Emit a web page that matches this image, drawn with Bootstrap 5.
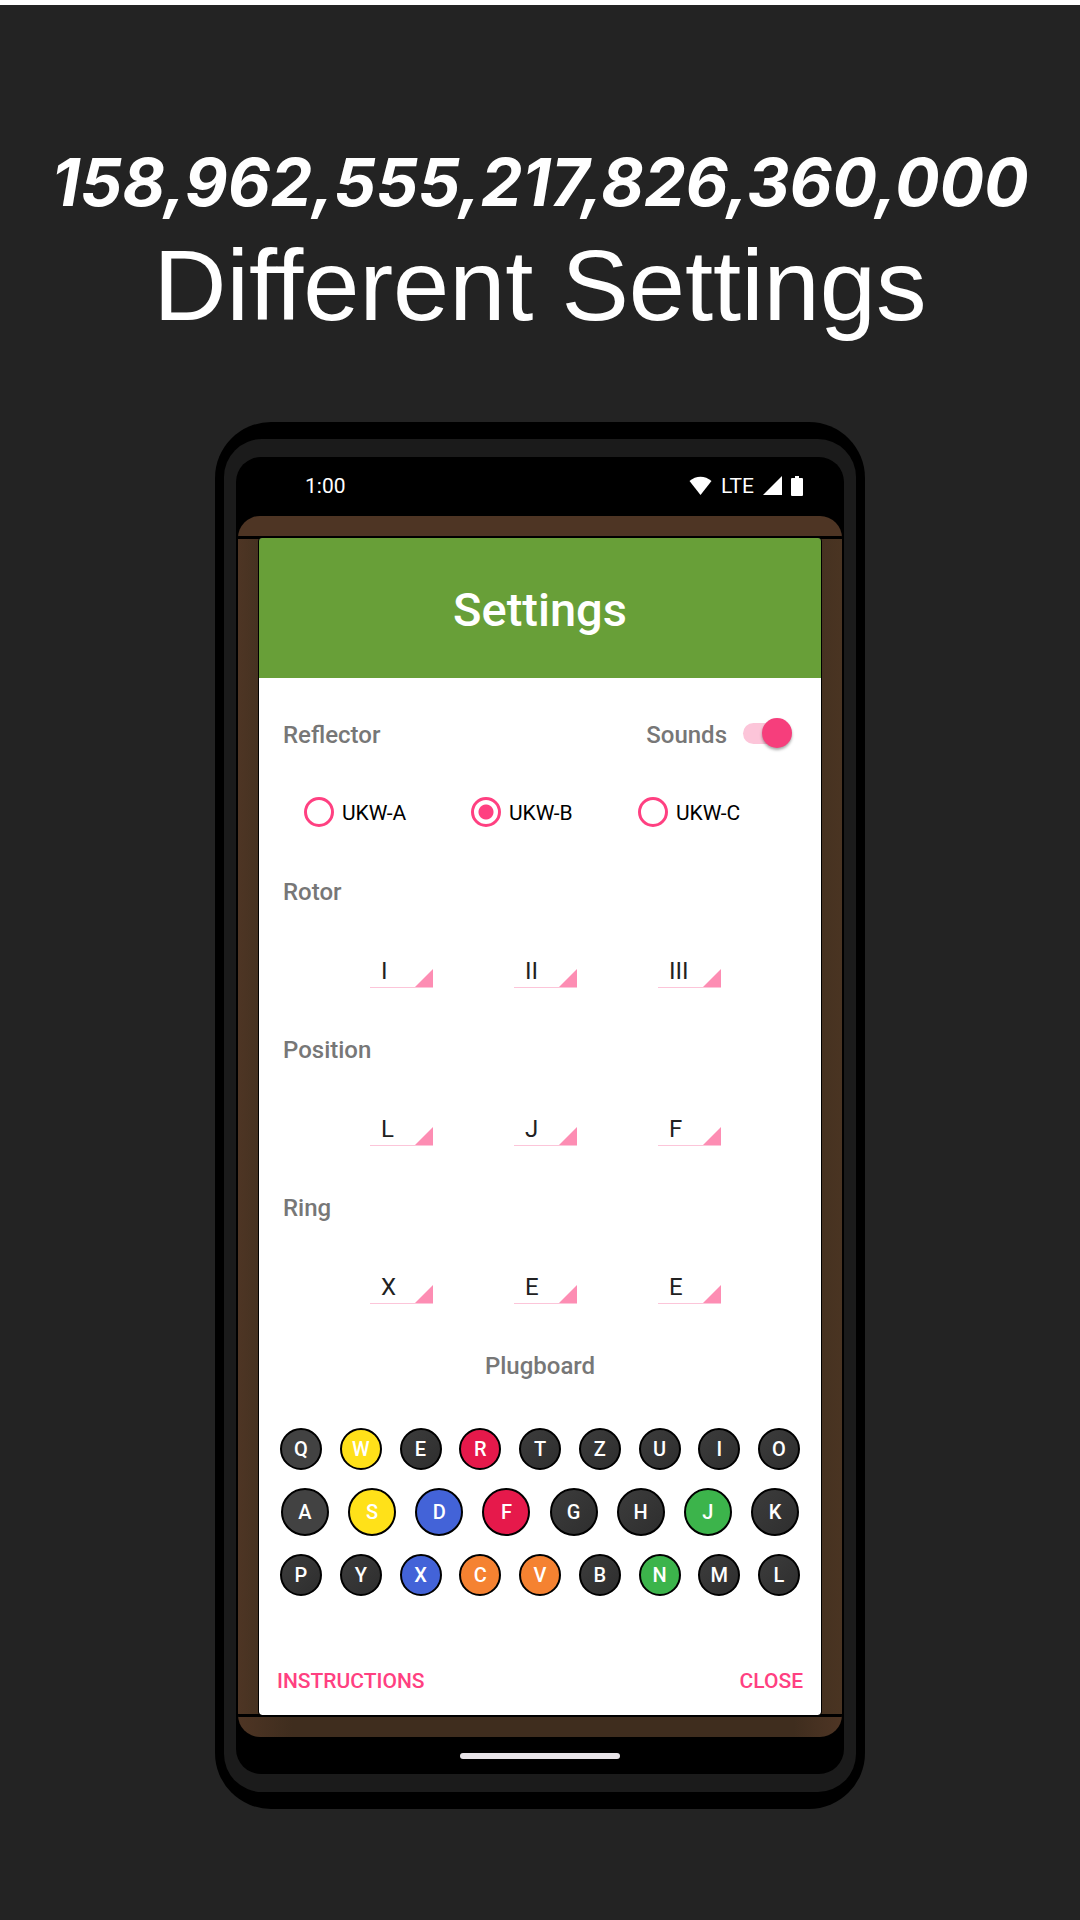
<!DOCTYPE html>
<html lang="en">
<head>
<meta charset="utf-8">
<meta name="viewport" content="width=device-width, initial-scale=1">
<title>Enigma Settings</title>
<link href="https://cdn.jsdelivr.net/npm/bootstrap@5.3.0/dist/css/bootstrap.min.css" rel="stylesheet">
<style>
:root { --pink: #ff4081; --pink-soft: #fd8db3; --grey: #777; --wood: #4e3524; --wood-dark: #463221; }
body { background: #232323; border-top: 5px solid #fff; font-family: Roboto, sans-serif; color: #fff; min-height: 100vh; }
.hero { font-family: Inter, sans-serif; padding-top: 137px; }
.hero-number { font-size: 66px; line-height: 80px; font-weight: 700; font-style: italic; }
.hero-text { font-family: "Liberation Sans", Arial, sans-serif; font-size: 101px; line-height: 126px; font-weight: 400; }
.phone { max-width: 650px; background: #000; border-radius: 56px; padding: 17px 9px; margin-top: 74px; }
.phone-rim { background: #1b1b1b; border-radius: 38px; padding: 18px 12px; }
.phone-screen { background: #000; border-radius: 25px; padding: 0 2px; }
.status-bar { height: 59px; padding: 0 39px 2px 67px; font-size: 21px; line-height: 24px; }
.status-icons { gap: 9px; font-size: 21px; }
.wood-case { background: linear-gradient(90deg, var(--wood), #3f2d1e 9%, #3f2d1e 92%, var(--wood)) bottom / 100% 30px no-repeat, var(--wood); border-radius: 22px; padding: 20px 0; overflow: hidden; }
.wood-sides { background: linear-gradient(90deg, var(--wood), var(--wood-dark) 20px, var(--wood-dark) calc(100% - 20px), #4a3422); border: solid #000; border-width: 3px 0; }
.dialog-panel { margin: -1px 21px; background: #fff; outline: 1px solid #000; border-radius: 3px; overflow: hidden; }
.dialog-title { background: #689f38; height: 140px; font-size: 47px; line-height: 56px; font-weight: 500; padding-top: 4px; }
.dialog-main { padding: 43px 21px 0; color: #212121; }
.section-label { font-size: 24px; line-height: 28px; font-weight: 500; color: var(--grey); }
.section-head { padding-left: 3px; }
.sounds { gap: 16px; margin-right: 8px; }
.switch-input { appearance: none; margin: 0; width: 49px; height: 28px; position: relative; }
.switch-input::before { content: ""; position: absolute; left: 0; top: 2px; width: 40px; height: 21px; border-radius: 11px; background: #fcc5d9; }
.switch-input::after { content: ""; position: absolute; right: 0; top: -3px; width: 30px; height: 30px; border-radius: 50%; background: #f63e7c; box-shadow: 0 2px 3px rgba(0,0,0,.35); }
.reflectors { padding: 48px 0 51px 24px; }
.reflectors > div { flex: 0 1 167px; }
.reflectors > div:last-child { flex-basis: auto; }
.ring-input { appearance: none; margin: 0; width: 30px; height: 30px; flex: none; border: 3px solid var(--pink); border-radius: 50%; }
.ring-input:checked { background: radial-gradient(circle, var(--pink) 7px, transparent 8px); }
.ring-label { font-size: 21px; line-height: 24px; color: #000; padding-left: 8px; padding-top: 2px; }
.wheel-row { padding: 50px 0 48px 90px; gap: 81px; }
.wheel { appearance: none; width: 63px; height: 32px; border: 0; border-bottom: 1px solid #fcc5d9; border-radius: 0; padding: 0 0 0 11px; font-size: 24px; line-height: 31px; color: #212121; background: linear-gradient(135deg, transparent 48%, var(--pink-soft) 52%) right bottom / 18px 18px no-repeat; }
.plugboard { margin-top: 48px; gap: 18px; }
.plug { width: 42px; height: 42px; border-radius: 50%; border: 2px solid #000; background: linear-gradient(135deg, #3c3c3c, #2e2e2e); color: #fff; font-size: 20px; line-height: 24px; font-weight: 500; padding: 0; }
.plug-lg { padding: 0 1px; }
.plug-lg .plug { width: 48px; height: 48px; }
.plug-grey { background: #424242; }
.plug-yellow { background: #ffe119; }
.plug-red { background: #e6194b; }
.plug-blue { background: #4363d8; }
.plug-orange { background: #f58231; }
.plug-green { background: #3cb44b; }
.dialog-actions { padding: 73px 18px 22px; }
.text-action { background: none; border: 0; padding: 0; color: var(--pink); font-size: 21px; line-height: 24px; font-weight: 500; }
.nav-area { height: 37px; padding-top: 16px; }
.nav-pill { width: 160px; height: 6px; border-radius: 3px; background: #e9e5e9; }
</style>
</head>
<body>
<header class="hero text-center">
  <h1 class="m-0"><span class="hero-number d-block">158,962,555,217,826,360,000</span><span class="hero-text d-block">Different Settings</span></h1>
</header>
<main class="phone w-100 mx-auto">
 <div class="phone-rim">
  <div class="phone-screen">
   <div class="status-bar d-flex justify-content-between align-items-center">
    <span>1:00</span>
    <div class="status-icons d-flex align-items-center">
     <svg width="23" height="20" viewBox="0 0 23 20" fill="#fff" aria-hidden="true"><path d="M.5 5C7-.8 16-.8 22.500 5L11.500 19z"/></svg>
     <span>LTE</span>
     <svg width="19" height="19" viewBox="0 0 19 19" fill="#fff" aria-hidden="true"><path d="M0 19L19 0v19z"/></svg>
     <svg width="12" height="20" viewBox="0 0 12 20" fill="#fff" aria-hidden="true"><path d="M4 0h4v2h3q1 0 1 1v16q0 1-1 1H1q-1 0-1-1V3q0-1 1-1h3z"/></svg>
    </div>
   </div>
   <div class="wood-case">
    <div class="wood-sides">
     <section class="dialog-panel">
      <h2 class="dialog-title m-0 d-flex align-items-center justify-content-center">Settings</h2>
      <div class="dialog-main">
       <div class="section-head d-flex justify-content-between align-items-center">
        <span class="section-label">Reflector</span>
        <div class="sounds d-flex align-items-center">
         <label class="section-label" for="sounds">Sounds</label>
         <input class="switch-input" type="checkbox" role="switch" id="sounds" checked>
        </div>
       </div>
       <div class="reflectors d-flex">
        <div class="d-flex align-items-center"><input class="ring-input" type="radio" name="ukw" id="ukwA"><label class="ring-label" for="ukwA">UKW-A</label></div>
        <div class="d-flex align-items-center"><input class="ring-input" type="radio" name="ukw" id="ukwB" checked><label class="ring-label" for="ukwB">UKW-B</label></div>
        <div class="d-flex align-items-center"><input class="ring-input" type="radio" name="ukw" id="ukwC"><label class="ring-label" for="ukwC">UKW-C</label></div>
       </div>
       <div class="section-head section-label">Rotor</div>
       <div class="wheel-row d-flex">
        <select class="wheel" aria-label="Rotor 1"><option>I</option></select>
        <select class="wheel" aria-label="Rotor 2"><option>II</option></select>
        <select class="wheel" aria-label="Rotor 3"><option>III</option></select>
       </div>
       <div class="section-head section-label">Position</div>
       <div class="wheel-row d-flex">
        <select class="wheel" aria-label="Position 1"><option>L</option></select>
        <select class="wheel" aria-label="Position 2"><option>J</option></select>
        <select class="wheel" aria-label="Position 3"><option>F</option></select>
       </div>
       <div class="section-head section-label">Ring</div>
       <div class="wheel-row d-flex">
        <select class="wheel" aria-label="Ring 1"><option>X</option></select>
        <select class="wheel" aria-label="Ring 2"><option>E</option></select>
        <select class="wheel" aria-label="Ring 3"><option>E</option></select>
       </div>
       <div class="section-label text-center">Plugboard</div>
       <div class="plugboard d-flex flex-column">
        <div class="d-flex justify-content-between">
         <button class="plug plug-grey">Q</button><button class="plug plug-yellow">W</button><button class="plug">E</button><button class="plug plug-red">R</button><button class="plug">T</button><button class="plug">Z</button><button class="plug">U</button><button class="plug">I</button><button class="plug">O</button>
        </div>
        <div class="plug-lg d-flex justify-content-between">
         <button class="plug plug-grey">A</button><button class="plug plug-yellow">S</button><button class="plug plug-blue">D</button><button class="plug plug-red">F</button><button class="plug">G</button><button class="plug">H</button><button class="plug plug-green">J</button><button class="plug">K</button>
        </div>
        <div class="d-flex justify-content-between">
         <button class="plug">P</button><button class="plug">Y</button><button class="plug plug-blue">X</button><button class="plug plug-orange">C</button><button class="plug plug-orange">V</button><button class="plug">B</button><button class="plug plug-green">N</button><button class="plug">M</button><button class="plug">L</button>
        </div>
       </div>
      </div>
      <div class="dialog-actions d-flex justify-content-between">
       <button class="text-action">INSTRUCTIONS</button>
       <button class="text-action">CLOSE</button>
      </div>
     </section>
    </div>
   </div>
   <div class="nav-area"><div class="nav-pill mx-auto"></div></div>
  </div>
 </div>
</main>
<script src="https://cdn.jsdelivr.net/npm/bootstrap@5.3.0/dist/js/bootstrap.bundle.min.js"></script>
</body>
</html>
